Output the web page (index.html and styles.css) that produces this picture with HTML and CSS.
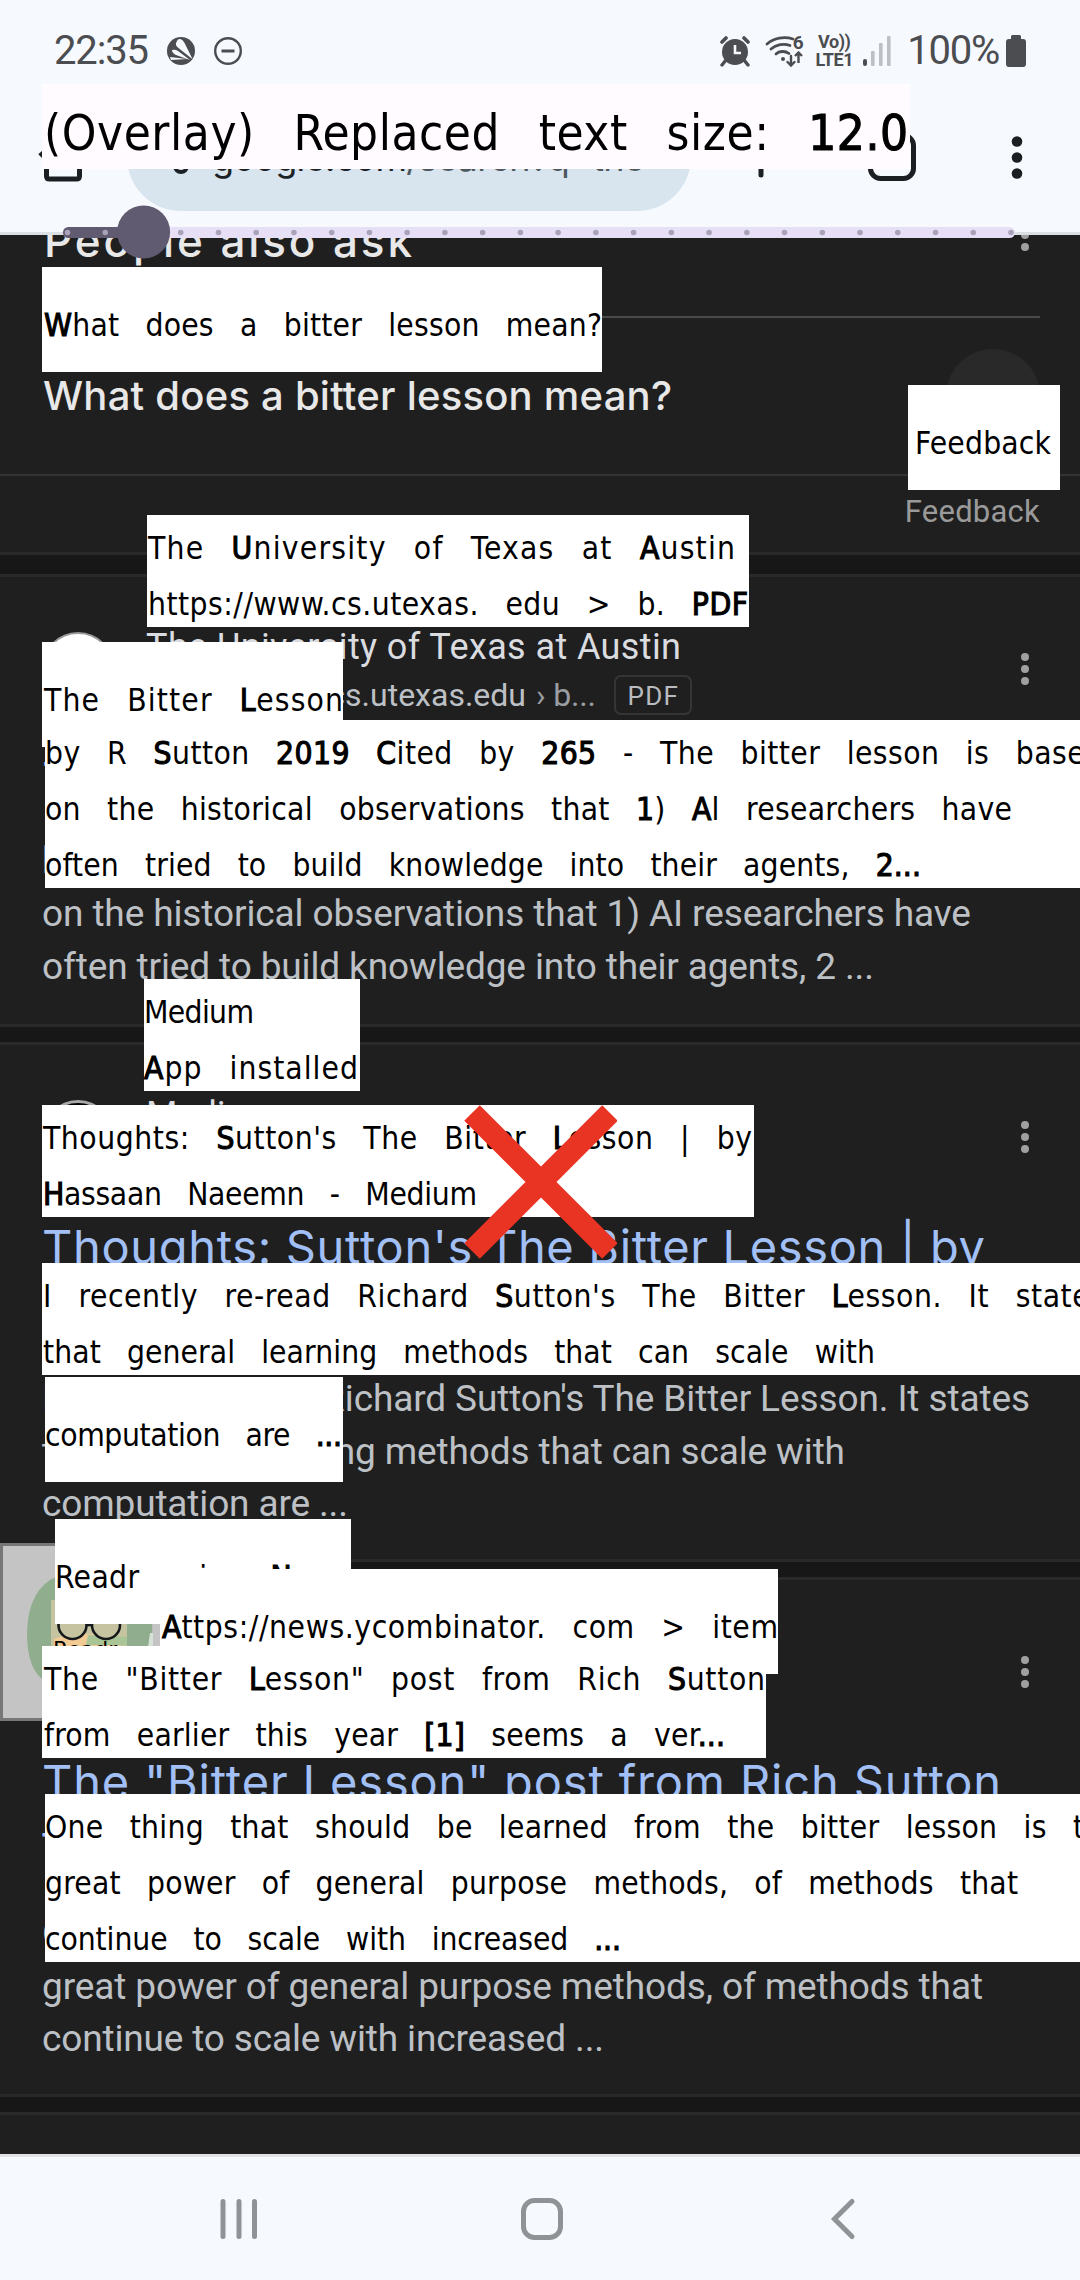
FILE: index.html
```html
<!DOCTYPE html>
<html lang="en">
<head>
<meta charset="utf-8">
<title>Search with text overlay</title>
<link rel="stylesheet" href="styles.css">
</head>
<body>
<div class="phone">
  <header class="top">
    <div class="status">
      <span class="clock" data-w="95">22:35</span>
      <svg class="ic-left" width="76" height="32" viewBox="0 0 76 32">
        <circle cx="15" cy="16" r="14" fill="#4b4d50"/>
        <path d="M11 7q2-5 6-2 1 1 2 3l7 17L13 13q-4-3-2-6z" fill="#f6f9fe" transform="rotate(-4 15 16)"/>
        <path d="M6 15q3-1 6 1l12 9-14-5q-4-2-4-5zM4 22l17 2-16 1z" fill="#f6f9fe"/>
        <circle cx="62" cy="16" r="12.8" fill="none" stroke="#4b4d50" stroke-width="2.4"/>
        <path d="M55.500 16h13" stroke="#4b4d50" stroke-width="3"/>
      </svg>
      <span class="spacer"></span>
      <svg class="ic-right" width="76" height="34" viewBox="0 0 76 34">
        <g fill="#4b4d50">
          <circle cx="15" cy="18" r="13"/>
          <path d="M6 26l-4 5M24 26l4 5" stroke="#4b4d50" stroke-width="3.4" stroke-linecap="round"/>
          <path d="M2 8l4-4M28 8l-4-4" stroke="#4b4d50" stroke-width="3.6" stroke-linecap="round"/>
        </g>
        <path d="M15 11v8h6" fill="none" stroke="#f6f9fe" stroke-width="2.6"/>
        <g fill="none" stroke="#4b4d50" stroke-width="2.8" stroke-linecap="round">
          <path d="M47 10c7-6 17-8 26-5"/>
          <path d="M51 15c5-4.500 13-6 19-3.500"/>
          <path d="M56 20c3-3 9-3.500 13-.5"/>
          <path d="M71 22v9M67.500 28l3.500 3.500 3.500-3.500" stroke-width="2.4"/>
        </g>
        <circle cx="63" cy="25" r="2" fill="#4b4d50"/>
      </svg>
      <span class="six"><b>6</b><svg width="9" height="13" viewBox="0 0 9 13"><path d="M4.500 12V2M1 5l3.500-3.500L8 5" fill="none" stroke="#4b4d50" stroke-width="2.4"/></svg></span>
      <span class="volte"><span data-w="33">Vo))</span><span data-w="38">LTE1</span></span>
      <svg class="bars" width="30" height="32" viewBox="0 0 30 32">
        <rect x="1" y="24" width="4" height="7" rx="2" fill="#4b4d50"/>
        <g fill="#bcbfc3"><rect x="9" y="16" width="3.600" height="15" rx="1"/><rect x="17" y="8" width="3.600" height="23" rx="1"/><rect x="25" y="1" width="3.600" height="30" rx="1"/></g>
      </svg>
      <span class="pct" data-w="93">100%</span>
      <svg class="batt" width="22" height="34" viewBox="0 0 22 34"><path d="M6 2.500Q6 1 7.500 1h7Q16 1 16 2.500V5h2q3 0 3 3v22q0 3-3 3H4q-3 0-3-3V8q0-3 3-3h2z" fill="#4b4d50"/></svg>
    </div>
    <div class="toolbar">
      <svg class="home-ic" width="46" height="50" viewBox="0 0 46 50"><path d="M8.500 20v24q0 3 3 3h27q3 0 3-3V20M2 24L24 4l22 20" fill="none" stroke="#1b1f22" stroke-width="5"/></svg>
      <div class="pill">
        <svg width="18" height="36" viewBox="0 0 18 36"><circle cx="9" cy="27" r="6" fill="none" stroke="#1b2226" stroke-width="4"/></svg>
        <span class="url" data-w="456">google.com<i>/search?q=the+</i></span>
      </div>
      <svg class="plus" width="44" height="44" viewBox="0 0 44 44"><path d="M22 3v37M3 22h38" stroke="#1b1f22" stroke-width="5" stroke-linecap="round"/></svg>
      <svg class="tabs" width="48" height="48" viewBox="0 0 48 48"><rect x="2.500" y="2.500" width="43" height="43" rx="10" fill="none" stroke="#1b1f22" stroke-width="5"/></svg>
      <svg class="kebab" width="12" height="44" viewBox="0 0 12 44" fill="#1b1f22"><circle cx="6" cy="6.500" r="5.300"/><circle cx="6" cy="22.500" r="5.300"/><circle cx="6" cy="38.500" r="5.300"/></svg>
    </div>
  </header>

  <main class="results">
    <section class="paa">
      <div class="paa-head"><h2 data-w="368">People also ask</h2><svg class="dots" width="10" height="34" viewBox="0 0 10 34"><circle cx="5" cy="4" r="4"/><circle cx="5" cy="15" r="4"/><circle cx="5" cy="27" r="4"/></svg></div>
      <div class="rule"></div>
      <div class="question"><h3 data-w="629">What does a bitter lesson mean?</h3><span class="disc"></span></div>
      <div class="feedback"><span data-w="135">Feedback</span></div>
    </section>
    <div class="gap wide"></div>

    <article class="card first">
      <div class="source">
        <span class="fav white"></span>
        <div class="who"><span class="name" data-w="535">The University of Texas at Austin</span>
          <span class="addr"><span data-w="380">https://www.cs.utexas.edu</span><em data-w="60">› b...</em><span class="chip">PDF</span></span></div>
        <svg class="dots" width="10" height="34" viewBox="0 0 10 34"><circle cx="5" cy="5" r="4"/><circle cx="5" cy="17" r="4"/><circle cx="5" cy="29" r="4"/></svg>
      </div>
      <h4><span>The Bitter Lesson</span></h4>
      <p><span>by R Sutton · 2019 · Cited by 265 — The bitter lesson is</span><span data-w="929">on the historical observations that 1) AI researchers have</span><span data-w="832">often tried to build knowledge into their agents, 2 ...</span></p>
    </article>
    <div class="gap"></div>

    <article class="card">
      <div class="source">
        <span class="fav black"></span>
        <div class="who"><span class="name">Medium</span><span class="addr"><span>App installed</span></span></div>
        <svg class="dots" width="10" height="34" viewBox="0 0 10 34"><circle cx="5" cy="5" r="4"/><circle cx="5" cy="17" r="4"/><circle cx="5" cy="29" r="4"/></svg>
      </div>
      <h4><span data-w="943">Thoughts: Sutton's The Bitter Lesson | by</span><span>Hassaan Naeem - Medium</span></h4>
      <p><span data-w="988">I recently re-read Richard Sutton's The Bitter Lesson. It states</span><span data-w="803">that general learning methods that can scale with</span><span data-w="306">computation are ...</span></p>
    </article>
    <div class="gap"></div>

    <article class="card">
      <div class="source">
        <span class="fav"></span>
        <div class="who"><span class="name">Hacker News</span><span class="addr"><span>https://news.ycombinator.com</span></span></div>
        <svg class="dots" width="10" height="34" viewBox="0 0 10 34"><circle cx="5" cy="5" r="4"/><circle cx="5" cy="17" r="4"/><circle cx="5" cy="29" r="4"/></svg>
      </div>
      <h4><span data-w="959">The "Bitter Lesson" post from Rich Sutton</span><span>from earlier this year [1] seems a ver...</span></h4>
      <p><span>One thing that should be learned from the bitter lesson is the</span><span data-w="941">great power of general purpose methods, of methods that</span><span data-w="562">continue to scale with increased ...</span></p>
    </article>
    <div class="gap"></div>
  </main>

  <nav class="nav">
    <svg width="40" height="44" viewBox="0 0 40 44"><path d="M5 4.500v35M21 4.500v35M36.500 4.500v35" stroke="#909395" stroke-width="5" stroke-linecap="round"/></svg>
    <svg class="nav-home" width="44" height="44" viewBox="0 0 44 44"><rect x="3.500" y="3.500" width="37" height="37" rx="11" fill="none" stroke="#909395" stroke-width="5"/></svg>
    <svg width="30" height="44" viewBox="0 0 30 44"><path d="M24 4.500L6.500 22 24 39.500" fill="none" stroke="#909395" stroke-width="5" stroke-linecap="round"/></svg>
  </nav>

  <div class="slider">
    <svg width="960" height="54" viewBox="0 0 960 54">
      <rect x="3" y="22" width="952" height="11" rx="5.500" fill="#e6dff5"/>
      <rect x="3" y="22" width="80" height="11" rx="5.500" fill="#615b71"/>
      <path d="M7.500 27.500H952" stroke="#a9a2b8" stroke-width="5.600" stroke-linecap="round" stroke-dasharray="0 37.740"/>
      <circle cx="83.600" cy="27" r="26.500" fill="#615b71"/>
    </svg>
  </div>
  <svg class="readr" width="178" height="178" viewBox="0 0 178 178">
    <rect x="1.500" y="1.500" width="175" height="175" fill="#c4c4c4" stroke="#777" stroke-width="3"/>
    <path d="M58 33Q28 45 27 90q0 37 18 48h95q14-20 12-60-4-40-40-45z" fill="#90ad8e"/>
    <rect x="51" y="57" width="76" height="60" fill="#c6c3a0"/>
    <path d="M54 96q28-10 66 0v10H54z" fill="#f2cb94"/>
    <path d="M88 92l39 2v8H86z" fill="#a9c595"/>
    <g fill="#c6c3a0" stroke="#16191b" stroke-width="2.600"><circle cx="72.500" cy="82" r="14"/><circle cx="106" cy="82" r="14"/><path d="M86 82h7"/></g>
    <text x="53" y="114" font-size="22">Readr</text>
    <path d="M150 90h3v14h-5z" fill="#d5e2d5"/>
  </svg>

  <div class="tag title"><span data-w="864">(Overlay) Replaced text size: <b>12.0</b></span></div>
  <div class="tag one t-what"><span data-w="558"><b>W</b>hat does a bitter lesson mean?</span></div>
  <div class="tag one t-feed"><span data-w="136">Feedback</span></div>
  <div class="tag t-univ"><span data-w="587">The <b>U</b>niversity of Texas at <b>A</b>ustin</span><span data-w="600">https://www.cs.utexas. edu &gt; b. <b>PDF</b></span></div>
  <div class="tag one t-bitter"><span data-w="299">The Bitter <b>L</b>esson</span></div>
  <div class="tag t-by"><span data-w="1058">by R <b>S</b>utton <b>2019</b> <b>C</b>ited by <b>265</b> - The bitter lesson is based</span><span data-w="967">on the historical observations that <b>1</b>) <b>A</b>l researchers have</span><span data-w="876">often tried to build knowledge into their agents, <b>2...</b></span></div>
  <div class="tag t-med"><span data-w="110">Medium</span><span data-w="214"><b>A</b>pp installed</span></div>
  <div class="tag t-thoughts"><span data-w="709">Thoughts: <b>S</b>utton's The Bitter <b>L</b>esson | by</span><span data-w="434"><b>H</b>assaan Naeemn - Medium</span></div>
  <div class="tag t-rec"><span data-w="1062">I recently re-read Richard <b>S</b>utton's The Bitter <b>L</b>esson. It states</span><span data-w="832">that general learning methods that can scale with</span></div>
  <div class="tag one t-comp"><span data-w="297">computation are <b>...</b></span></div>
  <div class="tag one t-readr"><span data-w="293">Readr using <b>N</b>ews</span></div>
  <div class="tag one t-http"><span data-w="616"><b>A</b>ttps://news.ycombinator. com &gt; item</span></div>
  <div class="tag t-post"><span data-w="721">The "Bitter <b>L</b>esson" post from Rich <b>S</b>utton</span><span data-w="681">from earlier this year <b>[1]</b> seems a ver<b>...</b></span></div>
  <div class="tag t-thing"><span data-w="1075">One thing that should be learned from the bitter lesson is the</span><span data-w="973">great power of general purpose methods, of methods that</span><span data-w="576">continue to scale with increased <b>...</b></span></div>
  <svg class="cross" width="154" height="154" viewBox="0 0 154 154"><path d="M9 8l138 138M147 8L9 146" stroke="#e93323" stroke-width="22"/></svg>
</div>
<script src="fit.js"></script>
</body>
</html>
```
FILE: fit.js
```js
// Spread each line's letters so that it fills the width given in data-w.
document.querySelectorAll('[data-w]').forEach(function (el) {
  var n = el.textContent.length;
  var natural = el.getBoundingClientRect().width;
  el.style.letterSpacing = ((Number(el.dataset.w) - natural) / (n - 1)) + 'px';
});
```
FILE: styles.css
```css
* { box-sizing: border-box; }
body { margin: 0; background: #1f1f1f; font-family: Roboto, "Liberation Sans", sans-serif; }
h2, h3, h4, p { margin: 0; font-weight: 400; }
svg { display: block; flex: none; }
.phone { position: relative; width: 1080px; height: 2280px; overflow: hidden; display: flex; flex-direction: column; }
.phone span { white-space: nowrap; }

.top { height: 235px; flex: none; background: #f6f9fe; border-bottom: 3px solid #dcdfe3; }
.status { height: 102px; padding: 0 53px 0 54px; display: flex; align-items: center; color: #4b4d50; font-size: 40px; line-height: 46px; }
.clock, .pct { white-space: nowrap; }
.ic-left { margin-left: 18px; }
.spacer { flex: 1; }
.six { width: 18px; height: 34px; margin-left: -7px; display: flex; flex-direction: column; align-items: center; font-size: 19px; line-height: 17px; }
.volte { width: 40px; margin-left: 7px; margin-right: 8px; display: flex; flex-direction: column; align-items: center; font-size: 18px; line-height: 18px; font-weight: 700; }
.bars { margin-right: 15px; }
.pct { margin-right: 6px; }
.toolbar { display: flex; align-items: center; height: 110px; padding: 0 57px 0 38px; }
.pill { width: 564px; height: 108px; margin-left: 43px; border-radius: 54px; background: #d8e5ee; padding-left: 45px; display: flex; align-items: center; }
.url { margin-left: 22px; padding-top: 2px; font: 36px/44px Inter, sans-serif; color: #1b2226; }
.url i { font-style: normal; color: #4d585f; }
.plus { margin-left: 48px; }
.tabs { margin-left: 85px; }
.kebab { margin-left: auto; }

.results { flex: 1; color: #dadce0; overflow: hidden; }
.dots { fill: #a0a0a0; margin-left: auto; margin-bottom: 2px; }
.paa { height: 317px; overflow: hidden; }
.paa-head { margin: -15px 50px 0 44px; height: 40px; display: flex; }
.paa h2 { font: 500 44px/42px Inter, sans-serif; color: #e8e8e8; white-space: nowrap; }
.paa h3 { font: 500 40px/50px Inter, sans-serif; color: #e8e8e8; white-space: nowrap; }
.rule { height: 2px; margin: 56px 40px 0 42px; background: #4a4a4a; }
.question { height: 156px; padding: 0 40px 0 43px; display: flex; align-items: center; justify-content: space-between; }
.disc { width: 94px; height: 94px; border-radius: 50%; background: #292929; }
.feedback { height: 78px; border-top: 2px solid #333; padding: 0 40px 6px 0; display: flex; justify-content: flex-end; align-items: center; font-size: 31px; color: #9a9a9a; }
.gap { height: 21px; background: #171717; border: solid #292929; border-width: 3px 0; }
.gap.wide { height: 25px; }
.card { height: 514px; padding: 49px 50px 0 42px; }
.card.first { height: 447px; }
.source { height: 88px; display: flex; align-items: center; }
.fav { width: 72px; height: 72px; border-radius: 50%; margin: 0 32px 4px 0; flex: none; }
.white { background: #fff; border: 2px solid #9a9a9a; }
.black { background: #000; border: 3px solid #a9a9a9; }
.who { display: flex; flex-direction: column; align-items: flex-start; gap: 8px; padding-top: 1px; }
.name { font-size: 36px; line-height: 40px; }
.addr { font-size: 32px; line-height: 40px; height: 40px; color: #bdc1c6; display: flex; align-items: center; }
.addr em { font-style: normal; color: #9a9da1; margin-left: 10px; white-space: nowrap; }
.chip { margin-left: 18px; width: 78px; height: 40px; border: 2px solid #343537; border-radius: 7px; font-size: 26px; line-height: 38px; text-align: center; letter-spacing: 1.3px; padding-left: 1px; color: #b9bbbf; }
.card h4 { font: 400 47px/60px Inter, sans-serif; color: #a2c0f6; padding-top: 35px; display: flex; flex-direction: column; align-items: flex-start; }
.card p { margin-top: 36px; font-size: 37px; line-height: 52.500px; color: #bdc1c6; display: flex; flex-direction: column; align-items: flex-start; }
.card.first p { margin-top: 25px; line-height: 53px; }

.nav { height: 126px; flex: none; background: #f6f9fe; border-top: 3px solid #e0e2e4; display: flex; justify-content: space-between; padding: 40px 222px 0 218px; }
.nav-home { margin-right: 3px; }

.slider { position: absolute; left: 60px; top: 205px; }
.readr { position: absolute; left: 0; top: 1543px; font-family: "DejaVu Sans", sans-serif; }
.tag { position: absolute; background: #fff; color: #000; padding: 5px 2px 0; display: flex; flex-direction: column; align-items: flex-start; font: 31.500px/56px "DejaVu Sans Condensed", "DejaVu Sans", sans-serif; font-stretch: condensed; word-spacing: 17px; }
.tag span { flex: none; }
.tag b { font-weight: 400; -webkit-text-stroke: 1.100px; }
.one { height: 105px; padding-top: 30px; }
.title { left: 42px; top: 84px; width: 868px; height: 85px; background: #fffbff; font-size: 49px; line-height: 70px; padding-top: 15px; word-spacing: 24px; }
.t-what { left: 42px; top: 267px; width: 560px; }
.t-feed { left: 908px; top: 385px; width: 152px; padding-left: 7px; }
.t-univ { left: 147px; top: 515px; width: 602px; height: 112px; padding-left: 1px; }
.t-bitter { left: 42px; top: 642px; width: 301px; }
.t-by { left: 45px; top: 720px; width: 1035px; height: 168px; padding-left: 0; }
.t-med { left: 144px; top: 979px; width: 216px; height: 112px; padding-left: 0; }
.t-thoughts { left: 42px; top: 1105px; width: 712px; height: 112px; padding-left: 1px; }
.t-rec { left: 42px; top: 1263px; width: 1038px; height: 112px; padding-left: 1px; }
.t-comp { left: 45px; top: 1377px; width: 298px; padding-left: 0; }
.t-readr { left: 55px; top: 1519px; width: 296px; padding-left: 0; }
.t-http { left: 160px; top: 1569px; width: 618px; }
.t-post { left: 42px; top: 1646px; width: 724px; height: 112px; }
.t-thing { left: 45px; top: 1794px; width: 1035px; height: 168px; padding-left: 0; }
.cross { position: absolute; left: 463px; top: 1105px; }
```
